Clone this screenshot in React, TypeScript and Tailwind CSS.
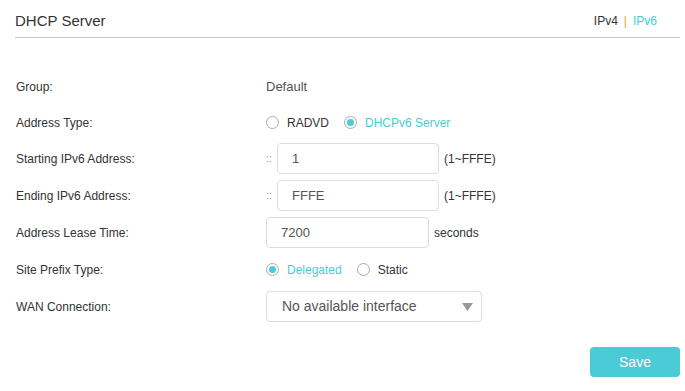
import React, { useState } from "react";

const TEAL = "text-[#4acbd6]";

function Radio({ checked, label, onClick }: { checked: boolean; label: string; onClick: () => void }) {
  return (
    <button type="button" onClick={onClick} className="flex items-center gap-[8px] mr-[15px]">
      <span className="w-[13px] h-[13px] rounded-full border border-[#aaa] bg-white flex items-center justify-center">
        {checked && <span className="w-[7px] h-[7px] rounded-full bg-[#4acbd6]" />}
      </span>
      <span className={`text-[12px] ${checked ? TEAL : "text-[#333]"}`}>{label}</span>
    </button>
  );
}

function Row({ label, children, mb = "mb-[6px]" }: { label: string; children: React.ReactNode; mb?: string }) {
  return (
    <div className={`flex items-center h-[31px] ${mb}`}>
      <div className="w-[251px] pl-[1px] text-[12px] text-[#333]">{label}</div>
      <div className="flex items-center">{children}</div>
    </div>
  );
}

export default function App() {
  const [addrType, setAddrType] = useState("dhcp");
  const [prefix, setPrefix] = useState("delegated");

  return (
    <div
      className="w-[685px] h-[391px] bg-white pl-[15px] pr-[5px]"
      style={{ fontFamily: '"Liberation Sans", Arial, sans-serif' }}
    >
      {/* HEADER */}
      <div className="flex items-center justify-between pt-[12px] pb-[7px] border-b border-[#c8c8c8]">
        <h1 className="text-[15px] leading-[18px] text-[#333] font-normal">DHCP Server</h1>
        <div className="flex items-center text-[12px] leading-[18px] mr-[23px]">
          <span className="text-[#333]">IPv4</span>
          <span className="mx-[6px] text-[#f0a030]">|</span>
          <span className={TEAL}>IPv6</span>
        </div>
      </div>

      {/* FORM */}
      <div className="mt-[33px]">
        <Row label="Group:" mb="mb-[5px]">
          <span className="text-[13px] text-[#555]">Default</span>
        </Row>

        <Row label="Address Type:" mb="mb-[5px]">
          <Radio checked={addrType === "radvd"} label="RADVD" onClick={() => setAddrType("radvd")} />
          <Radio checked={addrType === "dhcp"} label="DHCPv6 Server" onClick={() => setAddrType("dhcp")} />
        </Row>

        <Row label="Starting IPv6 Address:">
          <span className="text-[11px] text-[#999] w-[11px]">::</span>
          <input
            defaultValue="1"
            className="w-[162px] h-[31px] border border-[#ddd] rounded-[4px] pl-[14px] text-[13px] text-[#555] outline-none"
          />
          <span className="ml-[5px] text-[12px] text-[#333]">(1~FFFE)</span>
        </Row>

        <Row label="Ending IPv6 Address:">
          <span className="text-[11px] text-[#999] w-[11px]">::</span>
          <input
            defaultValue="FFFE"
            className="w-[162px] h-[31px] border border-[#ddd] rounded-[4px] pl-[14px] text-[13px] text-[#555] outline-none"
          />
          <span className="ml-[5px] text-[12px] text-[#333]">(1~FFFE)</span>
        </Row>

        <Row label="Address Lease Time:">
          <input
            defaultValue="7200"
            className="w-[163px] h-[31px] border border-[#ddd] rounded-[4px] pl-[14px] text-[13px] text-[#555] outline-none"
          />
          <span className="ml-[5px] text-[12px] text-[#333]">seconds</span>
        </Row>

        <Row label="Site Prefix Type:">
          <Radio checked={prefix === "delegated"} label="Delegated" onClick={() => setPrefix("delegated")} />
          <Radio checked={prefix === "static"} label="Static" onClick={() => setPrefix("static")} />
        </Row>

        <Row label="WAN Connection:" mb="mb-[25px]">
          <div className="w-[216px] h-[31px] border border-[#ddd] rounded-[4px] pl-[15px] pr-[8px] flex items-center justify-between">
            <span className="text-[14px] text-[#555]">No available interface</span>
            <svg width="11" height="8" viewBox="0 0 11 8">
              <path d="M0 0 H11 L5.5 8 Z" fill="#999" />
            </svg>
          </div>
        </Row>

        <div className="flex justify-end">
          <button className="w-[90px] h-[30px] rounded-[4px] bg-[#4acbd6] text-white text-[14px]">Save</button>
        </div>
      </div>
    </div>
  );
}
